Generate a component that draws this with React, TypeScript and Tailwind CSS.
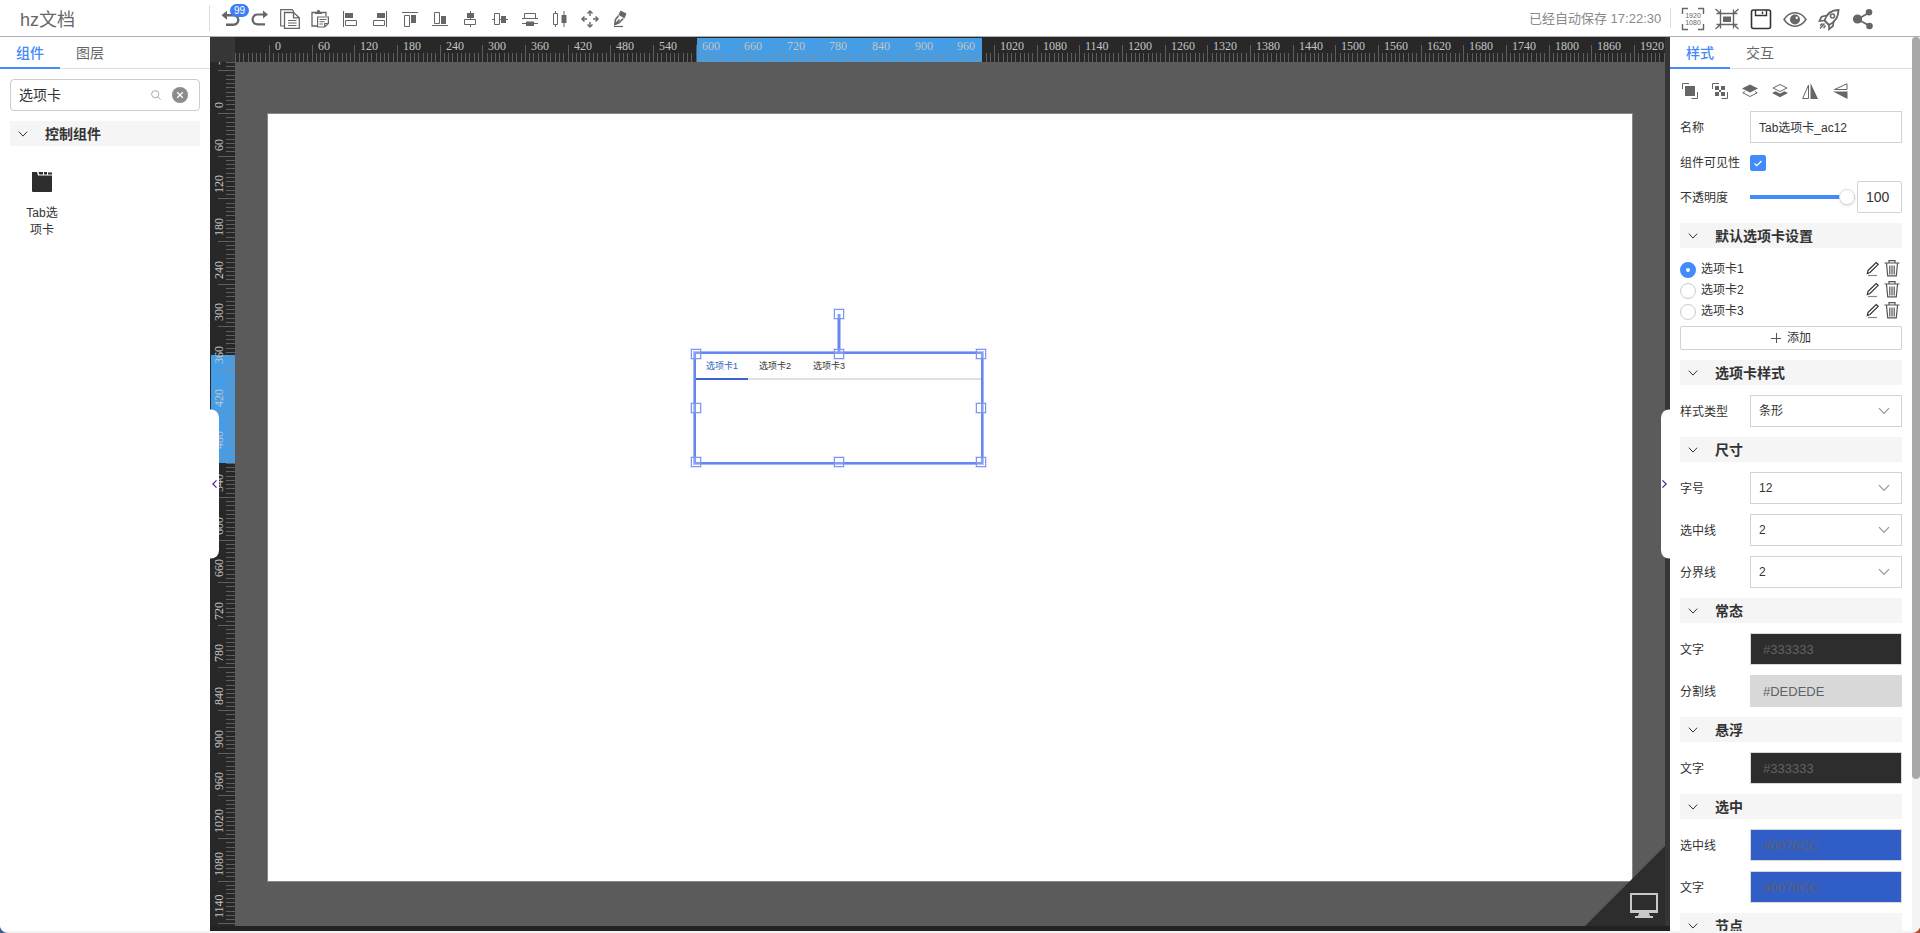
import React, { useState } from 'react';

/* ---------- icons ---------- */

type IconProps = { children: React.ReactNode; size?: 'xs' | 'sm' | 'lg'; box?: string; className?: string };

const sizes = { xs: 'h-4 w-4', sm: 'h-5 w-5', lg: 'h-6 w-6' };

function Icon({ children, size = 'sm', box = '0 0 20 20', className = '' }: IconProps) {
  return (
    <svg viewBox={box} className={`${sizes[size]} shrink-0 ${className}`} fill="none" stroke="currentColor" strokeWidth="1" aria-hidden="true">
      {children}
    </svg>
  );
}

const F = { fill: 'currentColor', stroke: 'none' };

const tools: { label: string; icon: React.ReactNode; badge?: string }[] = [
  {
    label: '撤销',
    badge: '99',
    icon: (
      <Icon>
        <path d="M4 6.200h9.500a4.800 4.800 0 0 1 0 9.600H6" strokeWidth="2.400" />
        <path d="M7 1.800v9L1.500 6.200z" {...F} />
      </Icon>
    ),
  },
  {
    label: '重做',
    icon: (
      <Icon>
        <path d="M14 5.500H7.500a4.900 4.900 0 0 0 0 9.800H15" strokeWidth="2.200" />
        <path d="M13 1.500v8l5-4z" {...F} />
      </Icon>
    ),
  },
  {
    label: '复制',
    icon: (
      <Icon>
        <path d="M4 17H.7V.7h11.600L14 3" strokeWidth="1.200" />
        <path d="M4.500 3.500h9l5.800 5.300v10.500H4.500z M13.500 3.500v5.300h5.800" strokeWidth="1.300" />
        <path d="M8 11.500h8.500M8 14h8.500M8 16.500h8.500" strokeWidth="1.200" />
      </Icon>
    ),
  },
  {
    label: '粘贴',
    icon: (
      <Icon>
        <path d="M7 17H2V3.500h3M12 3.500h4V7" strokeWidth="1.300" />
        <path d="M5 5V2.800h2C7 1.400 7.600 1 8.500 1s1.500.400 1.500 1.800h2V5z" {...F} />
        <path d="M7.600 8h10.800v6.500l-3.700 3.500H7.600z M18.400 14.500h-3.700V18" strokeWidth="1.200" />
        <path d="M9.500 10.500h7M9.500 12.700h5M9.500 15h3.500" />
      </Icon>
    ),
  },
  {
    label: '左对齐',
    icon: (
      <Icon>
        <path d="M3.500 2v16" />
        <path d="M5 4h8v5H5z" {...F} />
        <path d="M5.500 11.500h11v5h-11z" />
      </Icon>
    ),
  },
  {
    label: '右对齐',
    icon: (
      <Icon>
        <path d="M16.500 2v16" />
        <path d="M7 4h8v5H7z" {...F} />
        <path d="M3.500 11.500h11v5h-11z" />
      </Icon>
    ),
  },
  {
    label: '顶部对齐',
    icon: (
      <Icon>
        <path d="M2 3.500h16" />
        <path d="M4.500 6.500h5v11h-5z" />
        <path d="M11 6h5v8h-5z" {...F} />
      </Icon>
    ),
  },
  {
    label: '底部对齐',
    icon: (
      <Icon>
        <path d="M2 16.500h16" />
        <path d="M4.500 3.500h5v11h-5z" />
        <path d="M11 7h5v8h-5z" {...F} />
      </Icon>
    ),
  },
  {
    label: '水平居中',
    icon: (
      <Icon>
        <path d="M10.500 2v2M10.500 9v2M10.500 16v2" />
        <path d="M7 4h7v5H7z" {...F} />
        <path d="M4.500 10.500h11v5h-11z" />
      </Icon>
    ),
  },
  {
    label: '垂直居中',
    icon: (
      <Icon>
        <path d="M2 10.500h2M9 10.500h2M16 10.500h2" />
        <path d="M4.500 4.500h5v11h-5z" />
        <path d="M11 7h5v7h-5z" {...F} />
      </Icon>
    ),
  },
  {
    label: '水平分布',
    icon: (
      <Icon>
        <path d="M2 9.500h16M2 14.500h16" />
        <path d="M4.500 4.500h11v5h-11z" />
        <path d="M6 12.500h8v4.500H6z" {...F} />
      </Icon>
    ),
  },
  {
    label: '垂直分布',
    icon: (
      <Icon>
        <path d="M5.500 2v3M5.500 15v3M14 2v16" />
        <path d="M3.500 4.500h4v11h-4z" />
        <path d="M11.500 6h5v8h-5z" {...F} />
      </Icon>
    ),
  },
  {
    label: '移动',
    icon: (
      <Icon>
        <path d="M7.500 4.500L10 2l2.500 2.500M7.500 15.500L10 18l2.500-2.500M4.500 7.500L2 10l2.500 2.500M15.500 7.500L18 10l-2.500 2.500" strokeWidth="1.500" />
        <path d="M10 2.500V7M10 13v4.500M2.500 10H7M13 10h4.500" strokeWidth="1.400" />
      </Icon>
    ),
  },
  {
    label: '格式刷',
    icon: (
      <Icon>
        <path d="M10.500 1.500L16.500 4.500 14.500 9.500 8.500 5.800z" {...F} />
        <path d="M8.700 6.500L5.500 10.500 4.800 15.500 9 13.800 13.300 9.500M5 15.500l4.500-5" strokeWidth="1.600" />
        <path d="M4 17.500h9" strokeWidth="1.200" />
      </Icon>
    ),
  },
];

const actions: { label: string; icon: React.ReactNode }[] = [
  {
    label: '画布尺寸',
    icon: (
      <Icon size="lg" box="0 0 24 24">
        <path d="M1.500 7V1.500H7M17 1.500h5.500V7M1.500 17v5.500H7M17 22.500h5.500V17" strokeWidth="1.400" />
        <text x="12" y="11" textAnchor="middle" fontSize="7" fill="currentColor" stroke="none" fontFamily="Liberation Sans, sans-serif">1920</text>
        <text x="12" y="18" textAnchor="middle" fontSize="7" fill="currentColor" stroke="none" fontFamily="Liberation Sans, sans-serif">1080</text>
      </Icon>
    ),
  },
  {
    label: '适应屏幕',
    icon: (
      <Icon size="lg" box="0 0 24 24">
        <path d="M5.500 6.500h13v11h-13z" strokeWidth="1.400" />
        <path d="M8 9.500h8v5.500H8z" {...F} />
        <path d="M.500 2l5 4.500M5.500 2.500v4h-4M23.500 2l-5 4.500M18.500 2.500v4h4M.500 22l5-4.500M5.500 21.500v-4h-4M23.500 22l-5-4.500M18.500 21.500v-4h4" strokeWidth="1.300" />
      </Icon>
    ),
  },
  {
    label: '保存',
    icon: (
      <Icon size="lg" box="0 0 24 24" className="text-[#333]">
        <rect x="2.500" y="3" width="19" height="18.500" rx="2" strokeWidth="1.600" />
        <path d="M6.500 3v5.500h11V3" strokeWidth="1.400" />
        <path d="M13.500 4.500v2.500" strokeWidth="1.400" />
      </Icon>
    ),
  },
  {
    label: '预览',
    icon: (
      <Icon size="lg" box="0 0 24 24">
        <path d="M1 12.500C4 8 7.800 5.800 12 5.800s8 2.200 11 6.700c-3 4.500-6.800 6.700-11 6.700S4 17 1 12.500z" strokeWidth="1.500" />
        <circle cx="12" cy="12.500" r="5" {...F} />
        <circle cx="13.700" cy="10.800" r="1.200" fill="#fff" stroke="none" />
      </Icon>
    ),
  },
  {
    label: '发布',
    icon: (
      <Icon size="lg" box="0 0 24 24">
        <path d="M7.500 13.500C9.500 7.500 14 3 21.500 3c0 7-3.500 12-9.500 15z" strokeWidth="1.900" />
        <path d="M9.500 8.500L4.500 9.800 2.500 14l5-.500M16.500 14.500l-.500 4.500-4 3.200V17.500" strokeWidth="1.700" />
        <circle cx="15.500" cy="9" r="2" strokeWidth="1.500" />
        <path d="M7.500 16.500L3 21.500M5.500 16.500l-2.500 2M8.500 18.500l-2 2.500" strokeWidth="1.500" />
      </Icon>
    ),
  },
  {
    label: '分享',
    icon: (
      <Icon size="lg" box="0 0 24 24">
        <circle cx="6.500" cy="12" r="4.600" {...F} />
        <circle cx="18" cy="5.200" r="3.300" {...F} />
        <circle cx="18.500" cy="19" r="3.300" {...F} />
        <path d="M7 12l11-6.200M7 12.500l11 6" strokeWidth="1.800" />
      </Icon>
    ),
  },
];

const arrange: { label: string; icon: React.ReactNode }[] = [
  {
    label: '组合',
    icon: (
      <Icon size="xs" box="0 0 16 16">
        <path d="M3 3h10v10H3z" {...F} />
        <path d="M.500 6V.500H7M9.500 15.500h6V9" />
      </Icon>
    ),
  },
  {
    label: '取消组合',
    icon: (
      <Icon size="xs" box="0 0 16 16">
        <path d="M.500 6V.500H7M9.500 15.500h6V9" />
        <path d="M3 3h4v4H3zM9 3h4v4H9zM3 9h4v4H3zM9 9h4v4H9z" {...F} />
        <path d="M7 7h2v2H7z" {...F} />
      </Icon>
    ),
  },
  {
    label: '置于顶层',
    icon: (
      <Icon size="xs" box="0 0 16 16">
        <path d="M8 1.500L16 5.500 8 9.500 0 5.500z" {...F} />
        <path d="M3 8.500L.800 9.800 8 13.500l7.200-3.700L13 8.500" />
      </Icon>
    ),
  },
  {
    label: '置于底层',
    icon: (
      <Icon size="xs" box="0 0 16 16">
        <path d="M8 1.500L15 5 8 8.500 1 5z" />
        <path d="M0 10l3.500-1.800L8 10.500l4.500-2.300L16 10l-8 4.200z" {...F} />
      </Icon>
    ),
  },
  {
    label: '水平翻转',
    icon: (
      <Icon size="xs" box="0 0 16 16">
        <path d="M8.500 0v16H16z" {...F} />
        <path d="M6.500 2v13.500H.700z" />
      </Icon>
    ),
  },
  {
    label: '垂直翻转',
    icon: (
      <Icon size="xs" box="0 0 16 16">
        <path d="M15.500 8.500V16L1 8.500z" {...F} />
        <path d="M15 .800v5.700H2.500z" />
      </Icon>
    ),
  },
];

function Chevron({ className }: { className: string }) {
  return (
    <svg viewBox="0 0 12 8" className={className} fill="none" stroke="currentColor" strokeWidth="1.200" aria-hidden="true">
      <path d="M1 1.200l5 5.300 5-5.300" />
    </svg>
  );
}

function PencilIcon() {
  return (
    <svg viewBox="0 0 14 16" className="h-4 w-3.5" fill="none" stroke="#333" strokeWidth="1.200" aria-hidden="true">
      <path d="M2 9.500L10.200 1.500l2 1.800-8.200 8.200-2.700 1z" />
      <path d="M2 14.500h9" stroke="#888" />
    </svg>
  );
}

function TrashIcon() {
  return (
    <svg viewBox="0 0 16 17" className="h-[17px] w-4" fill="none" stroke="#555" strokeWidth="1.200" aria-hidden="true">
      <path d="M.500 3h15M5 2.500V.700h6v1.800M2.500 3.500l1.200 12.300h8.600l1.200-12.300M5.800 5.500v9M8 5.500v9M10.200 5.500v9" />
    </svg>
  );
}

/* ---------- rulers ---------- */

const STEP = 42.65;
const range = (from: number, to: number) => Array.from({ length: to - from + 1 }, (_, i) => from + i);

function HRuler() {
  const zero = 35;
  return (
    <svg className="h-[25px] w-full bg-[#282828]" aria-hidden="true">
      <rect x="462" y="1" width="285" height="24" fill="#459de5" />
      <g stroke="#8a8a8a" strokeOpacity="0.550">
        {range(-8, 327).map((i) => {
          const x = Math.round(zero + (i * STEP) / 10) - 0.5;
          return <line key={i} x1={x} x2={x} y1={i % 10 === 0 ? 8 : 16} y2="25" />;
        })}
      </g>
      <g fill="#c4c4c4" fontFamily="Liberation Serif, serif" fontSize="12">
        {range(0, 32).map((i) => (
          <text key={i} x={Math.round(zero + i * STEP) + 5} y="13">{i * 60}</text>
        ))}
      </g>
    </svg>
  );
}

function VRuler() {
  const zero = 52;
  return (
    <svg className="h-full w-[25px] bg-[#282828]" aria-hidden="true">
      <rect x="1" y="293" width="24" height="108" fill="#459de5" />
      <g stroke="#8a8a8a" strokeOpacity="0.550">
        {range(-12, 190).map((i) => {
          const y = Math.round(zero + (i * STEP) / 10) - 0.5;
          return <line key={i} y1={y} y2={y} x1={i % 10 === 0 ? 8 : 16} x2="25" />;
        })}
      </g>
      <g fill="#c4c4c4" fontFamily="Liberation Serif, serif" fontSize="12">
        {range(-1, 19).map((i) => {
          const y = Math.round(zero + i * STEP) - 6;
          return (
            <text key={i} x="13" y={y} transform={`rotate(-90 13 ${y})`}>{i * 60}</text>
          );
        })}
      </g>
    </svg>
  );
}

/* ---------- shared pieces ---------- */

function PanelTabs({ items }: { items: string[] }) {
  const [active, setActive] = useState(0);
  return (
    <div role="tablist" className="flex h-8 shrink-0 border-b border-[#e0e0e0]">
      {items.map((t, i) => (
        <button
          key={t}
          role="tab"
          aria-selected={i === active}
          onClick={() => setActive(i)}
          className={
            i === active
              ? 'h-8 w-15 border-b-2 border-[#438afa] pt-0.5 text-sm font-medium text-[#438afa]'
              : 'h-8 w-15 border-b-2 border-transparent pt-0.5 text-sm text-[#666]'
          }
        >
          {t}
        </button>
      ))}
    </div>
  );
}

function SectionTitle({ children }: { children: React.ReactNode }) {
  return (
    <h3 className="flex h-[25px] shrink-0 items-center bg-[#f5f5f5] pl-2 text-sm font-bold text-[#333]">
      <Chevron className="mr-[17px] h-2 w-2.5 text-[#333]" />
      {children}
    </h3>
  );
}

function Row({ id, label, children }: { id: string; label: string; children: React.ReactNode }) {
  return (
    <div className="flex h-8 shrink-0 items-center">
      <label htmlFor={id} className="w-[70px] shrink-0 pt-0.5 text-xs text-[#333]">{label}</label>
      <div className="relative min-w-0 flex-1">{children}</div>
    </div>
  );
}

function SelectRow({ id, label, value }: { id: string; label: string; value: string }) {
  return (
    <Row id={id} label={label}>
      <select id={id} defaultValue={value} className="block h-8 w-full appearance-none border border-[#d3d3d3] bg-white px-2 text-xs text-[#333]">
        <option>{value}</option>
      </select>
      <Chevron className="pointer-events-none absolute top-3 right-3 h-2 w-3 text-[#999]" />
    </Row>
  );
}

function ColorRow({ id, label, value, tone }: { id: string; label: string; value: string; tone: string }) {
  return (
    <Row id={id} label={label}>
      <input id={id} defaultValue={value} className={`block h-8 w-full border border-[#d9d9d9] px-3 text-[13px] text-[#606266] ${tone}`} />
    </Row>
  );
}

/* ---------- regions ---------- */

function Header() {
  return (
    <header className="flex h-[37px] shrink-0 border-b border-[#b0b0b0] bg-white text-[#666]">
      <h1 className="flex w-[209px] shrink-0 items-center pt-1 pl-5 text-lg text-[#666]">hz文档</h1>
      <div className="my-[5px] w-px bg-[#ddd]" />
      <div className="flex flex-1 items-center pt-0.5 pl-[5px]">
        {tools.map((t) => (
          <button key={t.label} aria-label={t.label} className="relative flex h-6 w-[30px] items-center justify-center">
            {t.icon}
            {t.badge && (
              <span className="absolute -top-[3px] -right-1 flex h-[13px] items-center rounded-full bg-[#3f7df6] px-1 text-[10px] leading-3 text-white">{t.badge}</span>
            )}
          </button>
        ))}
      </div>
      <div className="flex w-[391px] shrink-0 items-center">
        <span className="w-[141px] pt-0.5 text-[13px] whitespace-nowrap text-[#8a8a8a]">已经自动保存 17:22:30</span>
        <div className="mr-[5px] h-5 w-px bg-[#ddd]" />
        <div className="flex pt-0.5">
          {actions.map((a) => (
            <button key={a.label} aria-label={a.label} className="flex w-[34px] justify-center">{a.icon}</button>
          ))}
        </div>
      </div>
    </header>
  );
}

function LeftPanel() {
  return (
    <aside className="flex w-[210px] shrink-0 flex-col bg-white">
      <PanelTabs items={['组件', '图层']} />
      <div className="flex flex-col gap-2.5 p-2.5">
        <div className="flex h-8 items-center rounded-sm border border-[#ccc] pr-[11px] pl-2">
          <input aria-label="搜索组件" defaultValue="选项卡" className="w-full min-w-0 flex-1 text-sm text-[#333] outline-none" />
          <svg viewBox="0 0 10 10" className="mr-[11px] h-2.5 w-2.5 shrink-0" fill="none" stroke="#aaa" aria-hidden="true">
            <circle cx="4.200" cy="4.200" r="3.600" />
            <path d="M6.800 6.800L9.700 9.700" />
          </svg>
          <button aria-label="清除" className="flex h-4 w-4 shrink-0 items-center justify-center rounded-full bg-[#8c8c8c]">
            <svg viewBox="0 0 8 8" className="h-2 w-2" stroke="#fff" strokeWidth="1.300" aria-hidden="true">
              <path d="M1.200 1.200l5.600 5.600M6.800 1.200L1.200 6.800" />
            </svg>
          </button>
        </div>
        <SectionTitle>控制组件</SectionTitle>
        <button className="flex w-16 flex-col items-center pt-4 text-[#333]">
          <svg viewBox="0 0 20 20" className="h-5 w-5" aria-hidden="true">
            <path d="M0 0h5l1 3.500h14V19a1 1 0 0 1-1 1H1a1 1 0 0 1-1-1z" fill="#2d2d2d" />
            <path d="M6.500 0h4.500v2.500H7.200zM12 0h3v2.500h-3zM16 .500h4v2h-4z" fill="#2d2d2d" />
          </svg>
          <span className="mt-[13px] w-10 text-xs leading-[17px]">Tab选项卡</span>
        </button>
      </div>
    </aside>
  );
}

const handle = 'absolute h-2.5 w-2.5 -translate-x-1/2 -translate-y-1/2 border border-[#7b97f3] bg-white/20 ring-1 ring-[#7b97f3]/25';

function SelectedTabs() {
  return (
    <div className="absolute top-[238px] left-[426px] h-[112px] w-[289px] border-2 border-[#6685ee] ring-1 ring-[#6685ee]/60">
      <div className="flex h-[26px] border-b-2 border-[#e0e0e0] text-[9px] text-[#333]">
        <button className="-mb-0.5 h-[26px] w-[52px] border-b-2 border-[#3a66cc] pt-0.5 text-[#2f5ec4]">选项卡1</button>
        <button className="w-[54px] pt-0.5">选项卡2</button>
        <button className="w-[54px] pt-0.5">选项卡3</button>
      </div>
      <span className="absolute -top-10 left-1/2 h-[38px] w-[3px] -translate-x-1/2 bg-[#6685ee]" />
      <span className={`${handle} -top-10 left-1/2`} />
      <span className={`${handle} top-0 left-0`} />
      <span className={`${handle} top-0 left-1/2`} />
      <span className={`${handle} top-0 left-full`} />
      <span className={`${handle} top-1/2 left-0`} />
      <span className={`${handle} top-1/2 left-full`} />
      <span className={`${handle} top-full left-0`} />
      <span className={`${handle} top-full left-1/2`} />
      <span className={`${handle} top-full left-full`} />
    </div>
  );
}

function Workspace() {
  return (
    <main className="relative grid min-w-0 flex-1 grid-cols-[25px_1fr_5px] grid-rows-[25px_1fr_5px] bg-[#222]">
      <div className="bg-[#363636]" />
      <HRuler />
      <div className="row-span-2 bg-[#353535]" />
      <VRuler />
      <div className="relative min-h-0 overflow-hidden bg-[#5b5b5b] px-[33px] pt-[52px]">
        <div className="relative aspect-video w-full bg-[#fefefe] outline outline-[#888]">
          <SelectedTabs />
        </div>
        <div className="absolute right-0 bottom-0 h-20 w-20">
          <svg viewBox="0 0 80 80" className="h-full w-full" aria-hidden="true">
            <path d="M80 0v80H0z" fill="#2d2d2d" />
            <path d="M46 48h26v17H46z" fill="none" stroke="#c8c8c8" strokeWidth="2" />
            <path d="M45 64h28v3H45zM54 67h10l1 3h3v2H50v-2h3z" fill="#c8c8c8" />
          </svg>
        </div>
      </div>
      <button aria-label="收起左侧面板" className="absolute top-1/2 left-0 flex h-[149px] w-[9px] -translate-y-1/2 items-center justify-center rounded-r-lg bg-white">
        <svg viewBox="0 0 6 9" className="h-[9px] w-1.5" fill="none" stroke="#551a9b" strokeWidth="1.200" aria-hidden="true">
          <path d="M4.500 .800L.800 4.500 4.500 8.200" />
        </svg>
      </button>
      <button aria-label="收起右侧面板" className="absolute top-1/2 right-0 flex h-[149px] w-[9px] -translate-y-1/2 items-center rounded-l-lg bg-white">
        <svg viewBox="0 0 6 9" className="h-[9px] w-1.5" fill="none" stroke="#551a9b" strokeWidth="1.200" aria-hidden="true">
          <path d="M1.500 .800L5.200 4.500 1.500 8.200" />
        </svg>
      </button>
    </main>
  );
}

function RightPanel() {
  const [opacity, setOpacity] = useState(100);
  return (
    <aside className="flex w-[250px] shrink-0 bg-white">
      <div className="flex min-w-0 flex-1 flex-col">
        <PanelTabs items={['样式', '交互']} />
        <div className="flex min-h-0 flex-1 flex-col gap-2.5 overflow-hidden px-2.5 pt-3">
          <div className="flex h-5 shrink-0 gap-3.5 pl-0.5 text-[#666]">
            {arrange.map((a) => (
              <button key={a.label} aria-label={a.label}>{a.icon}</button>
            ))}
          </div>
          <Row id="name" label="名称">
            <input id="name" defaultValue="Tab选项卡_ac12" className="block h-8 w-full border border-[#d3d3d3] px-2 pb-0.5 text-xs text-[#333]" />
          </Row>
          <div className="flex h-[18px] shrink-0 items-end">
            <label htmlFor="visible" className="w-[70px] text-xs text-[#333]">组件可见性</label>
            <span className="relative h-4 w-4">
              <input id="visible" type="checkbox" defaultChecked className="peer block h-4 w-4 appearance-none rounded-xs border border-[#ccc] checked:border-[#438afa] checked:bg-[#438afa]" />
              <svg viewBox="0 0 16 16" className="pointer-events-none absolute inset-0 hidden h-4 w-4 peer-checked:block" fill="none" stroke="#fff" strokeWidth="1.300" aria-hidden="true">
                <path d="M4.500 8.500l2.300 2.200L11.500 6" />
              </svg>
            </span>
          </div>
          <div className="flex h-8 shrink-0 items-center">
            <label htmlFor="opacity" className="w-[70px] shrink-0 pt-0.5 text-xs text-[#333]">不透明度</label>
            <input
              id="opacity"
              type="range"
              value={opacity}
              onChange={(e) => setOpacity(Number(e.target.value))}
              className="h-4 min-w-0 flex-1 appearance-none bg-transparent [&::-webkit-slider-runnable-track]:h-1 [&::-webkit-slider-runnable-track]:bg-[#438afa] [&::-webkit-slider-thumb]:-mt-1.5 [&::-webkit-slider-thumb]:h-4 [&::-webkit-slider-thumb]:w-4 [&::-webkit-slider-thumb]:appearance-none [&::-webkit-slider-thumb]:rounded-full [&::-webkit-slider-thumb]:border [&::-webkit-slider-thumb]:border-[#ddd] [&::-webkit-slider-thumb]:bg-white [&::-webkit-slider-thumb]:shadow-sm"
            />
            <input
              aria-label="不透明度数值"
              value={opacity}
              onChange={(e) => setOpacity(Number(e.target.value) || 0)}
              className="ml-0.5 h-8 w-[45px] rounded-xs border border-[#d3d3d3] px-2 text-sm text-[#333]"
            />
          </div>
          <SectionTitle>默认选项卡设置</SectionTitle>
          <div className="shrink-0">
            {['选项卡1', '选项卡2', '选项卡3'].map((t, i) => (
              <div key={t} className="flex h-[21px] items-center">
                <label className="flex flex-1 items-center gap-[5px] text-xs text-[#333]">
                  <input type="radio" name="tab" defaultChecked={i === 0} className="mt-0.5 h-4 w-4 appearance-none rounded-full border border-[#ccc] bg-white checked:border-[6px] checked:border-[#438afa]" />
                  {t}
                </label>
                <button aria-label={`编辑${t}`} className="mr-1"><PencilIcon /></button>
                <button aria-label={`删除${t}`} className="mr-0.5"><TrashIcon /></button>
              </div>
            ))}
            <button className="mt-[5px] flex h-6 w-full items-center justify-center gap-1.5 rounded-xs border border-[#d3d3d3] text-xs text-[#333]">
              <svg viewBox="0 0 10 10" className="h-2.5 w-2.5" stroke="#555" aria-hidden="true">
                <path d="M5.500 0v10M0 5.500h10" />
              </svg>
              添加
            </button>
          </div>
          <SectionTitle>选项卡样式</SectionTitle>
          <SelectRow id="kind" label="样式类型" value="条形" />
          <SectionTitle>尺寸</SectionTitle>
          <SelectRow id="font-size" label="字号" value="12" />
          <SelectRow id="active-line" label="选中线" value="2" />
          <SelectRow id="divider" label="分界线" value="2" />
          <SectionTitle>常态</SectionTitle>
          <ColorRow id="normal-text" label="文字" value="#333333" tone="bg-[#2d2d2d]" />
          <ColorRow id="normal-line" label="分割线" value="#DEDEDE" tone="bg-[#d8d8d8]" />
          <SectionTitle>悬浮</SectionTitle>
          <ColorRow id="hover-text" label="文字" value="#333333" tone="bg-[#2d2d2d]" />
          <SectionTitle>选中</SectionTitle>
          <ColorRow id="active-line-color" label="选中线" value="#0070CC" tone="bg-[#305dc6]" />
          <ColorRow id="active-text" label="文字" value="#0070CC" tone="bg-[#305dc6]" />
          <SectionTitle>节点</SectionTitle>
        </div>
      </div>
      <div className="w-2 shrink-0 bg-[#f4f4f4]">
        <div className="h-[83%] rounded-full bg-[#a8a8a8]" />
      </div>
    </aside>
  );
}

export default function App() {
  return (
    <div className="h-screen bg-linear-to-r from-[#3b5f8f] to-[#b4472a] font-['Liberation_Sans','Noto_Sans_CJK_SC',sans-serif]">
      <div className="flex h-full flex-col overflow-hidden rounded-b-lg bg-[#f4f4f4] pb-0.5">
        <Header />
        <div className="flex min-h-0 flex-1">
          <LeftPanel />
          <Workspace />
          <RightPanel />
        </div>
      </div>
    </div>
  );
}
